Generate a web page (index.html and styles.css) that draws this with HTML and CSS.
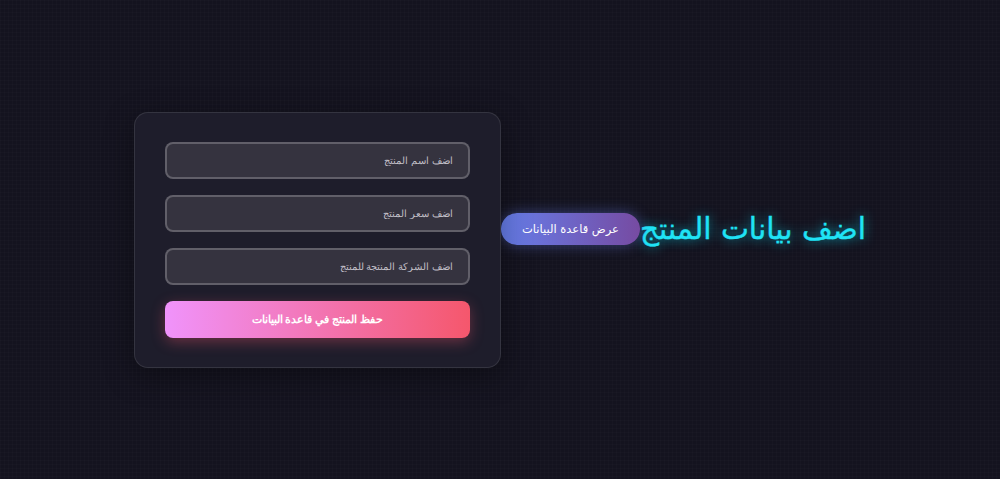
FILE: index.html
```html
<!DOCTYPE html>
<html lang="ar" dir="rtl">
<head>
<meta charset="utf-8">
<title>اضف بيانات المنتج</title>
<link rel="stylesheet" href="styles.css">
</head>
<body>
<main class="page">
  <header class="head">
    <h1 class="title">اضف بيانات المنتج</h1>
    <button class="view-btn" type="button">عرض قاعدة البيانات</button>
  </header>
  <form class="card">
    <input class="field" type="text" placeholder="اضف اسم المنتج">
    <input class="field" type="text" placeholder="اضف سعر المنتج">
    <input class="field" type="text" placeholder="اضف الشركة المنتجة للمنتج">
    <button class="save-btn" type="button">حفظ المنتج في قاعدة البيانات</button>
  </form>
</main>
</body>
</html>
```
FILE: styles.css
```css
html, body {
  margin: 0;
  height: 100%;
}
body {
  background-color: #14131f;
  background-image:
    linear-gradient(rgba(255,255,255,0.012) 1px, transparent 1px),
    linear-gradient(90deg, rgba(255,255,255,0.012) 1px, transparent 1px);
  background-size: 4px 4px;
  font-family: "DejaVu Sans", sans-serif;
  color: #fff;
}
.page {
  min-height: 100%;
  display: flex;
  align-items: center;
  justify-content: center;
}
.head {
  display: flex;
  align-items: center;
  margin-bottom: 22px;
}
.title {
  margin: 0;
  font-size: 29.7px;
  font-weight: normal;
  color: #1fe3f5;
  -webkit-text-stroke: 0.4px #1fe3f5;
  text-shadow: 0 0 12px rgba(0, 229, 255, 0.7);
  white-space: nowrap;
}
.view-btn {
  height: 32px;
  padding: 0 21px;
  border: none;
  border-radius: 16px;
  background: linear-gradient(90deg, #667eea, #764ba2);
  color: #fff;
  font-family: "DejaVu Sans", sans-serif;
  font-size: 11.5px;
  box-shadow: 0 0 14px rgba(102, 126, 234, 0.45);
  white-space: nowrap;
}
.card {
  width: 305px;
  padding: 29px 30px;
  display: flex;
  flex-direction: column;
  gap: 16px;
  background: #1e1d2b;
  border: 1px solid rgba(255,255,255,0.1);
  border-radius: 14px;
  box-shadow: 0 8px 30px rgba(0,0,0,0.35);
}
.field {
  height: 37px;
  box-sizing: border-box;
  padding: 0 15px;
  background: #35333f;
  border: 2px solid rgba(255,255,255,0.22);
  border-radius: 8px;
  color: #ddd;
  font-family: "Liberation Sans", sans-serif;
  font-size: 10px;
  direction: rtl;
  outline: none;
}
.field::placeholder {
  color: #c0bec6;
}
.save-btn {
  height: 37px;
  border: none;
  border-radius: 8px;
  background: linear-gradient(90deg, #f093fb, #f5576c);
  color: #fff;
  font-family: "Liberation Sans", sans-serif;
  font-size: 10.5px;
  font-weight: bold;
  box-shadow: 0 4px 14px rgba(245, 87, 108, 0.35);
}
```
